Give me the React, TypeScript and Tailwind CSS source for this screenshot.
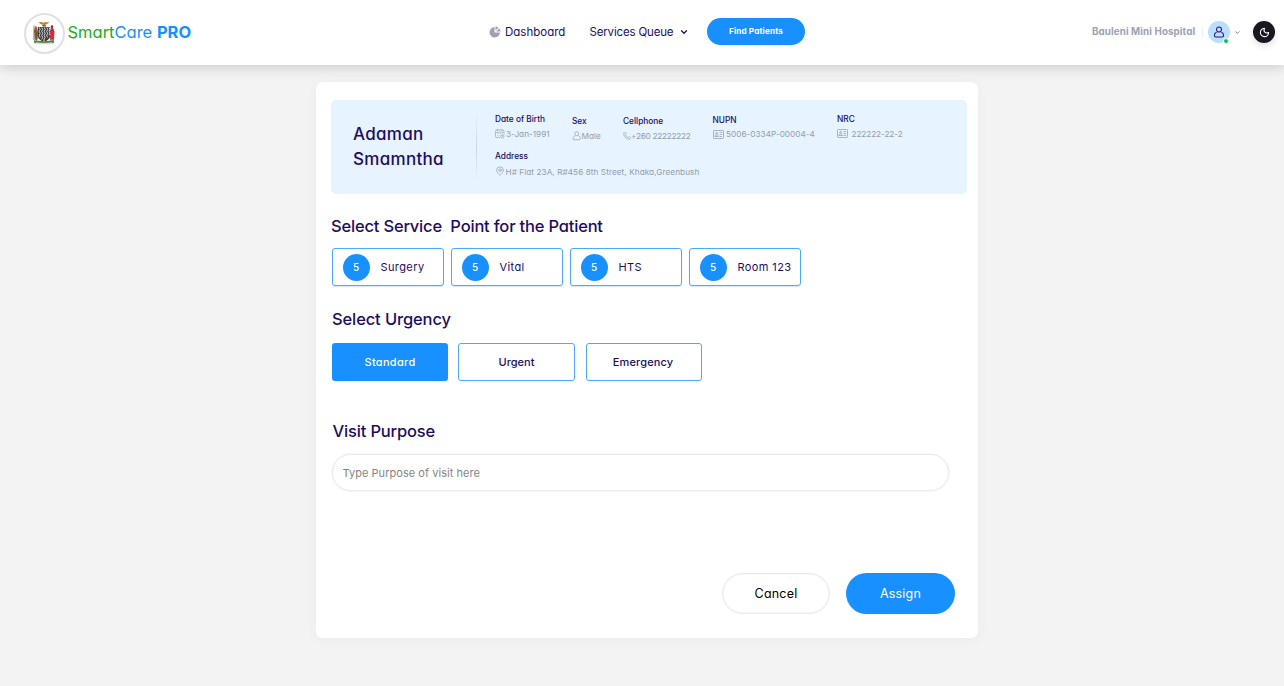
import type { ReactNode } from 'react';
import { ChevronDown, MapPin, Moon, Phone } from 'lucide-react';

function CoatOfArms() {
  return (
    <svg viewBox="0 0 22 24" className="h-6 w-[22px]">
      <path d="M5.5 1.3 8.5 1l2 .8L12 .9l4.5.6-2.4 1.6-1.6.5-.4 1.4h-2L9.4 3.5 7.4 3z" fill="#bd8434" />
      <path d="M9 4.3h4.5l-.7 1.2H9.6z" fill="#6f5130" />
      <path d="M4.8 6h12.4v8.5c0 3-2.5 5-6.2 6.5-3.7-1.5-6.2-3.5-6.2-6.5z" fill="#38383e" />
      <g stroke="#dcdce0" strokeWidth="1" fill="none">
        <path d="m6.2 6.4 1 2-1 2 1 2-1 2 1 2M8.7 6.4l1 2-1 2 1 2-1 2 1 2-1 2M11.2 6.4l1 2-1 2 1 2-1 2 1 2-1 2M13.7 6.4l1 2-1 2 1 2-1 2 1 2M16.1 6.4l.8 2-.8 2 .8 2-.8 2" />
      </g>
      <path d="M2.4 5.2c1.5-.2 1.8 1 1.5 2.2l1.3 3.3-.6 8.1H1.5L2 12 .9 9.7z" fill="#a5562b" />
      <path d="m1.2 10 3.6.6-.3 5H1.6z" fill="#6c6133" />
      <path d="M1 4.5.9 19M3.3 15.5l.2 4.2" stroke="#77502e" strokeWidth=".7" />
      <path d="M18.4 5c1.6-.2 2 1.1 1.6 2.5l1.5 3-.5 8.3h-4.2l.4-6-.6-2 1.3-2.6z" fill="#d52b3a" />
      <circle cx="19" cy="5.4" r="1.2" fill="#67352d" />
      <path d="m17.3 9.7 3.8-1M18 18.5v1.7m2-1.7v1.7" stroke="#6d3732" strokeWidth=".7" />
      <path d="M.8 19.2c6 1 14.2 1 20.4 0l-.4 2.7c-6.2 1.5-13.5 1.5-19.5 0z" fill="#47834b" />
      <path d="M3.1 21.2c5.1 1.1 10.8 1.1 15.8 0l.3 1.3c-5.3 1.4-11.2 1.4-16.3 0z" fill="#dddcd4" />
      <path d="m10.3 18 1.6.1.2 3.1h-2z" fill="#c8903e" />
    </svg>
  );
}

function PieIcon() {
  return (
    <svg viewBox="0 0 24 24" className="size-[12px] shrink-0 fill-[#a1a0b4]">
      <path d="M11 2v11h11A10.5 10.5 0 1 1 11 2z" />
      <path d="M13 .8c2.2 0 4.4.8 6.2 2.2L13 9.2z" />
      <path d="M20.6 4.4c1.5 1.8 2.3 4 2.4 6.6h-9z" />
    </svg>
  );
}

function PersonIcon({ className }: { className: string }) {
  return (
    <svg viewBox="0 0 24 24" className={className} fill="none" stroke="currentColor" strokeLinejoin="round">
      <circle cx="12" cy="7" r="5" />
      <path d="M7.2 12.5C4.2 13.5 2.8 16 2.8 19c0 2 1 3 3 3h12.4c2 0 3-1 3-3 0-3-1.4-5.5-4.4-6.5" />
    </svg>
  );
}

function CalendarIcon() {
  return (
    <svg viewBox="0 0 20 20" className="size-[9.5px] shrink-0" fill="none" stroke="currentColor" strokeWidth="1.4">
      <path d="M10 18H4c-2 0-3-1-3-3V5c0-2 1-3 3-3h12c2 0 3 1 3 3v6M5 0v4m10-4v4M2 7h16M5 10h2m3 0h2M5 14h2m3 0h1" />
      <circle cx="15.5" cy="15.5" r="3.5" />
      <path d="M15.5 13.5v2H17" />
    </svg>
  );
}

function IdCardIcon() {
  return (
    <svg viewBox="0 0 22 18" className="h-[9px] w-[11px] shrink-0" fill="none" stroke="currentColor" strokeWidth="1.5">
      <rect x="1" y="1" width="20" height="16" rx="1.5" />
      <circle cx="7.3" cy="6.6" r="1.8" />
      <path d="M3.8 13c.3-2.5 1.4-3.5 3.5-3.5s3.2 1 3.5 3.5zM13 5h5m-5 4h5m-5 4h5" />
    </svg>
  );
}

type FieldProps = { label: string; value: string; icon: ReactNode; className: string; rowClass: string };

function Field({ label, value, icon, className, rowClass }: FieldProps) {
  return (
    <div className={`shrink-0 ${className}`}>
      <div className="text-[8.3px] leading-3 font-medium text-[#1c0d63]">{label}</div>
      <div className={`flex items-center text-[8.2px] leading-3 text-[#929daf] ${rowClass}`}>
        {icon}
        <span>{value}</span>
      </div>
    </div>
  );
}

const services = [
  { name: 'Surgery', count: 5 },
  { name: 'Vital', count: 5 },
  { name: 'HTS', count: 5 },
  { name: 'Room 123', count: 5 },
];

export default function App() {
  return (
    <div className="flex h-[686px] w-[1284px] flex-col overflow-hidden bg-[#f3f3f3] font-['Inter',sans-serif] whitespace-nowrap text-[#1c0d63] [font-feature-settings:'cv11']">
      <header className="flex h-[65px] shrink-0 bg-white shadow-[0_2px_12px_rgba(0,0,0,0.18)]">
        <div className="flex w-[489px] shrink-0 pt-[12.5px] pl-[23.5px]">
          <div className="flex size-[41px] items-center justify-center rounded-full border-[2.5px] border-[#dfdfe6]">
            <CoatOfArms />
          </div>
          <div className="ml-[3px] pt-[7px] text-[16.5px] leading-6 text-[#1890ff]">
            <span className="text-[#20ad20]">Smart</span>Care <b className="font-bold">PRO</b>
          </div>
        </div>
        <nav className="flex h-[64px] w-[603px] shrink-0 items-center text-[11.5px]">
          <PieIcon />
          <a className="w-[87.5px] shrink-0 pt-px pl-1">Dashboard</a>
          <a className="w-[90px] shrink-0 pt-px pl-px tracking-[-0.17px]">Services Queue</a>
          <ChevronDown className="size-[10px] shrink-0" strokeWidth={3} />
          <button className="mb-px ml-[18.5px] h-[27px] w-[98px] shrink-0 rounded-full bg-[#1890ff] text-[8.2px] font-bold tracking-[0.12px] text-white">
            Find Patients
          </button>
        </nav>
        <div className="flex h-16 items-center">
          <span className="w-[110px] pt-px text-[9.8px] font-bold tracking-[0.1px] text-[#a1a0b4]">Bauleni Mini Hospital</span>
          <div className="h-[11px] w-px bg-[#e6f1fc]" />
          <div className="relative ml-[5px] flex size-[22px] items-center justify-center rounded-full bg-[#badeff]">
            <PersonIcon className="size-[12px] stroke-[2.1] text-[#271873]" />
            <i className="absolute right-[1px] bottom-[-1px] size-[6px] rounded-full border border-white bg-[#00c74d]" />
          </div>
          <ChevronDown className="ml-[4px] size-[7px] text-[#777]" strokeWidth={3} />
          <div className="ml-[12px] flex size-[22px] items-center justify-center rounded-full bg-[#181820] shadow-[0_3px_6px_rgba(0,0,0,0.12)]">
            <Moon className="size-[11px] text-white" strokeWidth={2.3} />
          </div>
        </div>
      </header>

      <main className="mt-[17px] ml-[316px] h-[556px] w-[662px] rounded-[7px] bg-white pt-[18px] pl-[15px] shadow-[0_2px_14px_rgba(0,0,0,0.04)]">
        <section className="flex h-[94px] w-[636px] rounded-[5px] bg-[#e7f3ff]">
          <h1 className="w-[145px] pt-[22px] pl-[22px] text-[17px] leading-[24.5px] font-medium tracking-[0.3px]">
            Adaman
            <br />
            Smamntha
          </h1>
          <div className="mt-3 h-[70px] w-px bg-linear-to-b from-transparent via-[#cbd5e2] to-transparent" />
          <div className="pl-[18px]">
            <div className="flex h-[50px]">
              <Field label="Date of Birth" value="3-Jan-1991" icon={<CalendarIcon />} className="w-[77px] pt-[13px]" rowClass="mt-[3px] gap-[1.5px]" />
              <Field label="Sex" value="Male" icon={<PersonIcon className="size-[9.5px] shrink-0 stroke-[1.8]" />} className="w-[51px] pt-[15px]" rowClass="mt-[3px]" />
              <Field label="Cellphone" value="+260 22222222" icon={<Phone className="size-2 shrink-0" strokeWidth={1.8} />} className="w-[89.5px] pt-[14.5px]" rowClass="mt-[3.5px] tracking-[-0.24px]" />
              <Field label="NUPN" value="5006-0334P-00004-4" icon={<IdCardIcon />} className="w-[124.5px] pt-[14px]" rowClass="mt-[2px] gap-[2.5px] tracking-[0.03px]" />
              <Field label="NRC" value="222222-22-2" icon={<IdCardIcon />} className="pt-[13px]" rowClass="mt-[2.5px] gap-[3.5px] tracking-[-0.08px]" />
            </div>
            <Field label="Address" value="H# Flat 23A, R#456 8th Street, Khaka,Greenbush" icon={<MapPin className="mb-[3px] size-[10px] shrink-0" strokeWidth={1.7} />} className="" rowClass="mt-[3.5px] gap-[0.5px] tracking-[0.07px]" />
          </div>
        </section>

        <h2 className="mt-5 text-[16.5px] leading-6 font-medium tracking-[-0.19px] whitespace-pre">Select Service  Point for the Patient</h2>
        <div className="mt-[10px] ml-px flex gap-[7px]">
          {services.map((service) => (
            <button key={service.name} className="flex h-[38px] w-[112px] items-center rounded-[3px] border border-[#4da9fc] pl-[9.5px] text-[11px] tracking-[0.4px] shadow-[0_1px_1px_rgba(24,144,255,0.2)]">
              <span className="mr-[11px] flex size-[27px] items-center justify-center rounded-full bg-[#1890ff] text-[10px] font-medium tracking-normal text-white">{service.count}</span>
              {service.name}
            </button>
          ))}
        </div>

        <h2 className="mt-[21px] ml-px text-[16.5px] leading-6 font-medium tracking-[-0.12px]">Select Urgency</h2>
        <div className="mt-[12px] ml-px flex text-[11px] font-medium">
          <button className="h-[38px] w-[116px] rounded-[3px] bg-[#1890ff] pt-px tracking-[0.3px] text-white">Standard</button>
          <button className="ml-[10px] h-[38px] w-[117px] rounded-[3px] border border-[#4da9fc] pt-px">Urgent</button>
          <button className="ml-[11px] h-[38px] w-[116px] rounded-[3px] border border-[#4da9fc] pt-px pr-[2px] tracking-[0.15px]">Emergency</button>
        </div>

        <h2 className="mt-[38px] ml-[1.5px] text-[16.5px] leading-6 font-medium tracking-[-0.17px]">Visit Purpose</h2>
        <input
          className="mt-[11px] ml-px block h-[37px] w-[617px] rounded-full border border-[#e9e9e9] px-[9.5px] text-[11px] tracking-[0.04px] shadow-[0_0_0_1px_rgba(0,0,0,0.035)] placeholder:text-[#858585]"
          placeholder="Type Purpose of visit here"
        />

        <div className="mt-[82px] flex gap-4 pl-[391px] text-[12.5px]">
          <button className="h-[41px] w-[108px] rounded-full border border-[#e9e9e9] pt-px tracking-[0.2px] text-black shadow-[inset_0_0_0_1px_rgba(0,0,0,0.035)]">Cancel</button>
          <button className="h-[41px] w-[109px] rounded-full bg-[#1890ff] pt-px tracking-[0.2px] text-white">Assign</button>
        </div>
      </main>
    </div>
  );
}
